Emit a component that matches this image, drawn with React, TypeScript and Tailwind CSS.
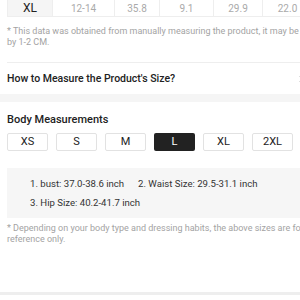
import React from "react";

const sizes = ["XS", "S", "M", "L", "XL", "2XL"];

export default function App() {
  return (
    <div className="w-[300px] h-[300px] overflow-hidden bg-white" style={{ fontFamily: "Roboto, 'Noto Sans', sans-serif" }}>
      <div className="w-[324px]">
        {/* table row */}
        <div className="px-[7px]">
          <div className="flex h-[17px] border-l border-b border-[#eeeeee] text-[10px] text-[#aaaaaa]">
            <div className="w-[45px] shrink-0 bg-[#f5f5f5] flex items-center justify-center text-[12px] text-[#222222] border-r border-[#eeeeee]">XL</div>
            <div className="w-[62px] shrink-0 flex items-center justify-center border-r border-[#eeeeee]">12-14</div>
            <div className="w-[45px] shrink-0 flex items-center justify-center border-r border-[#eeeeee]">35.8</div>
            <div className="w-[54px] shrink-0 flex items-center justify-center border-r border-[#eeeeee]">9.1</div>
            <div className="w-[49px] shrink-0 flex items-center justify-center border-r border-[#eeeeee]">29.9</div>
            <div className="w-[50px] shrink-0 flex items-center justify-center border-r border-[#eeeeee]">22.0</div>
          </div>
          <p className="mt-[9px] text-[9px] leading-[11px] text-[#a3a3a3]">
            * This data was obtained from manually measuring the product, it may be off by 1-2 CM.
          </p>
        </div>
        {/* how to measure */}
        <div className="mt-[14px] ml-[7px] border-t border-[#eeeeee] h-[32px] flex items-center justify-between pr-[20px]">
          <span className="text-[10.5px] font-medium text-[#222222]">How to Measure the Product's Size?</span>
          <svg width="5" height="8" viewBox="0 0 5 8" className="shrink-0">
            <path d="M1 1 L4 4 L1 7" fill="none" stroke="#333333" strokeWidth="1.2" />
          </svg>
        </div>
        <div className="h-[8px] bg-[#f5f5f5]" />
        {/* body measurements */}
        <div className="px-[7px] pt-[10px]">
          <div className="text-[11px] font-medium text-[#222222] leading-[15px]">Body Measurements</div>
          <div className="mt-[6px] flex gap-[8px]">
            {sizes.map((s) => (
              <div
                key={s}
                className={
                  s === "L"
                    ? "w-[41px] h-[18px] rounded-[2px] bg-[#222222] text-white text-[11px] flex items-center justify-center"
                    : "w-[41px] h-[18px] rounded-[2px] border border-[#e2e2e2] text-[#222222] text-[11px] flex items-center justify-center"
                }
              >
                {s}
              </div>
            ))}
          </div>
          <div className="mt-[17px] bg-[#f6f6f6] pl-[23px] pt-[6px] pb-[6px] text-[9.6px] text-[#333333] leading-[19px]">
            <div className="flex">
              <span className="w-[108px] shrink-0">1. bust: 37.0-38.6 inch</span>
              <span>2. Waist Size: 29.5-31.1 inch</span>
            </div>
            <div>3. Hip Size: 40.2-41.7 inch</div>
          </div>
          <p className="mt-[5px] text-[9px] leading-[11px] text-[#a3a3a3] pr-[4px]">
            * Depending on your body type and dressing habits, the above sizes are for reference only.
          </p>
        </div>
        <div className="mt-[47px] h-[3px] bg-[#eeeeee]" />
      </div>
    </div>
  );
}
